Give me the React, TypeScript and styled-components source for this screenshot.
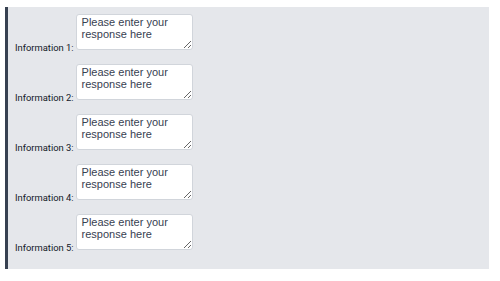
import styled, { createGlobalStyle } from 'styled-components';

const GlobalStyle = createGlobalStyle`
  html, body {
    margin: 0;
    padding: 0;
    background: #ffffff;
  }
  body {
    font-family: 'Liberation Sans', Arial, sans-serif;
  }
`;

const Panel = styled.div`
  margin: 7px 11px 0 5px;
  height: 262px;
  box-sizing: border-box;
  background: #e5e7eb;
  border-left: 3px solid #374151;
  padding: 7px 0 0 7px;
  display: flex;
  flex-direction: column;
  gap: 14px;
`;

const Row = styled.div`
  display: flex;
  align-items: flex-end;
`;

const Label = styled.label`
  font-family: Roboto, 'Liberation Sans', Arial, sans-serif;
  font-size: 9.4px;
  color: #111827;
  line-height: 1;
  margin-bottom: -2px;
  margin-right: 2px;
`;

const Field = styled.textarea`
  width: 117px;
  height: 36px;
  box-sizing: border-box;
  margin: 0;
  padding: 2px 5px;
  border: 1px solid #d1d5db;
  border-radius: 3px;
  background: #ffffff;
  font-family: 'Liberation Sans', Arial, sans-serif;
  font-size: 11px;
  line-height: 11.5px;
  color: #374151;
  outline: none;

  &::placeholder {
    color: #374151;
    opacity: 1;
  }
`;

const items = [1, 2, 3, 4, 5];

const App = () => {
  return (
    <>
      <GlobalStyle />
      <Panel>
        {items.map((n) => (
          <Row key={n}>
            <Label htmlFor={`info-${n}`}>Information {n}:</Label>
            <Field id={`info-${n}`} placeholder="Please enter your response here" />
          </Row>
        ))}
      </Panel>
    </>
  );
};

export default App;
